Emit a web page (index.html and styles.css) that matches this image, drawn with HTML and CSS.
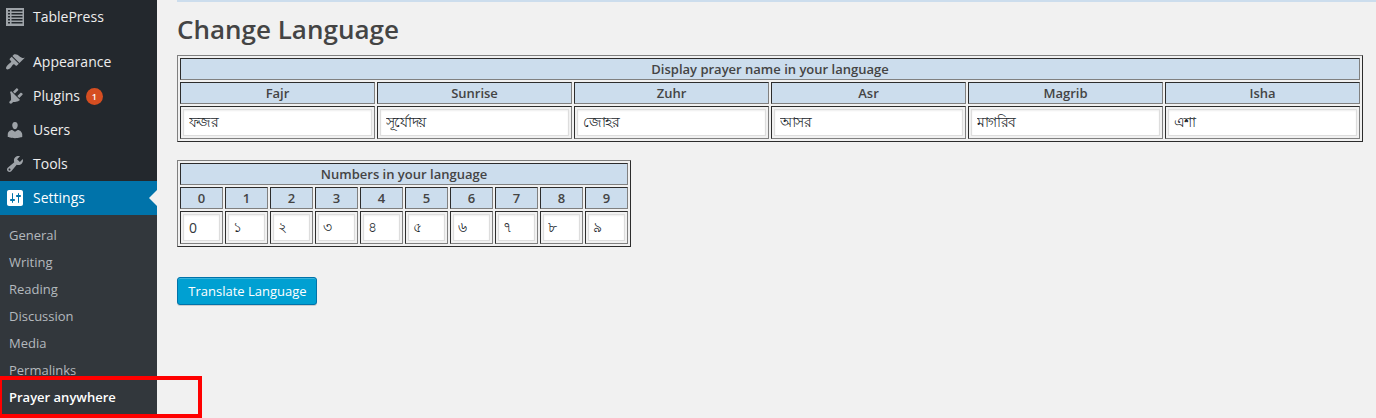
FILE: index.html
```html
<!DOCTYPE html>
<html lang="en">
<head>
<meta charset="utf-8">
<title>Change Language</title>
<link rel="stylesheet" href="styles.css">
</head>
<body>
<div class="layout">
  <nav class="sidebar">
    <ul class="menu">
      <li class="menu-item"><svg class="icon" viewBox="0 0 20 20"><path fill-rule="evenodd" d="M1 1h18v18H1zM3 3v1.500h2V3zM6.500 3v1.500H17.500V3zM3 6v1.500h2V6zM6.500 6v1.500H17.500V6zM3 9v1.500h2V9zM6.500 9v1.500H17.500V9zM3 12v1.500h2V12zM6.500 12v1.500H17.500V12zM3 15v1.500h2V15zM6.500 15v1.500H17.500V15z"/></svg><span>TablePress</span></li>
      <li class="separator"></li>
      <li class="menu-item"><svg class="icon" viewBox="0 0 20 20"><path d="M14.480 11.060L7.410 3.990l1.500-1.500c.5-.56 2.300-.47 3.510.32 1.210.8 1.430 1.280 2.910 2.100 1.180.64 2.450 1.260 4.450.85zm-.71.71L6.700 4.700 4.930 6.470a.996.996 0 0 0 0 1.410l1.060 1.060c.39.39.39 1.030 0 1.420-.6.600-1.430 1.110-2.210 1.690-.35.260-.700.530-1.010.84C1.430 14.230.400 16.080 1.400 17.070c.99 1 2.840-.03 4.180-1.360.31-.31.580-.66.850-1.020.570-.78 1.080-1.610 1.690-2.210a.996.996 0 0 1 1.410 0l1.060 1.060c.39.39 1.020.39 1.410 0z"/></svg><span>Appearance</span></li>
      <li class="menu-item"><svg class="icon" viewBox="0 0 20 20"><path d="M13.110 4.360L9.870 7.600 8 5.730l3.240-3.240c.35-.34 1.050-.2 1.560.32.520.51.660 1.210.31 1.550zm-8 1.770l.91-1.120 9.010 9.010-1.190.84c-.71.710-2.630 1.160-3.820 1.160H8.140L6.900 17.260c-.59.590-1.540.590-2.120 0-.59-.58-.59-1.530 0-2.120l1.240-1.240v-1.880c0-1.190-.16-4.630-.91-5.890zm7.260 3.970l3.240-3.240c.34-.35 1.040-.21 1.550.31.520.51.660 1.210.31 1.550l-3.240 3.250z"/></svg><span>Plugins</span><b class="badge">1</b></li>
      <li class="menu-item"><svg class="icon" viewBox="0 0 20 20"><path d="M10 9.250c-2.270 0-2.730-3.440-2.730-3.440C7 4.020 7.820 2 9.970 2c2.160 0 2.980 2.020 2.710 3.810 0 0-.41 3.440-2.680 3.440zm0 2.570L12.720 10c2.390 0 4.520 2.330 4.520 4.530v2.490s-3.650 1.130-7.240 1.130c-3.650 0-7.240-1.130-7.240-1.130v-2.490c0-2.250 1.940-4.480 4.470-4.480z"/></svg><span>Users</span></li>
      <li class="menu-item"><svg class="icon" viewBox="0 0 20 20"><path d="M16.680 9.770c-1.340 1.340-3.300 1.670-4.950.99l-5.410 6.520c-.99.990-2.590.990-3.580 0s-.99-2.590 0-3.570l6.520-5.420c-.68-1.650-.35-3.610.99-4.950 1.280-1.280 3.120-1.620 4.720-1.060l-2.890 2.890 2.820 2.820 2.860-2.870c.53 1.580.180 3.390-1.080 4.650zM3.810 16.210c.4.390 1.040.390 1.430 0 .4-.4.400-1.040 0-1.430-.39-.4-1.030-.4-1.430 0-.39.390-.39 1.030 0 1.430z"/></svg><span>Tools</span></li>
      <li class="menu-item current"><svg class="icon" viewBox="0 0 20 20"><path fill-rule="evenodd" d="M18 16V4c0-1.100-.9-2-2-2H4c-1.100 0-2 .9-2 2v12c0 1.100.9 2 2 2h12c1.100 0 2-.9 2-2zM8 11h1c.550 0 1 .450 1 1s-.45 1-1 1H8v1.500c0 .280-.22.500-.5.500s-.5-.22-.5-.5V13H6c-.55 0-1-.45-1-1s.450-1 1-1h1V5.500c0-.28.220-.5.500-.5s.5.220.5.500zm5-2h-1c-.55 0-1-.45-1-1s.450-1 1-1h1V5.500c0-.28.220-.5.500-.5s.5.220.5.500V7h1c.550 0 1 .450 1 1s-.45 1-1 1h-1v5.500c0 .280-.22.500-.5.500s-.5-.22-.5-.5z"/></svg><span>Settings</span></li>
    </ul>
    <ul class="submenu">
      <li>General</li><li>Writing</li><li>Reading</li><li>Discussion</li><li>Media</li><li>Permalinks</li><li class="active">Prayer anywhere</li>
    </ul>
    <div class="highlight"></div>
  </nav>
  <main class="content">
    <div class="notice-edge"></div>
    <h2 class="title">Change Language</h2>
    <table class="grid names">
      <tr><th colspan="6">Display prayer name in your language</th></tr>
      <tr><th>Fajr</th><th>Sunrise</th><th>Zuhr</th><th>Asr</th><th>Magrib</th><th>Isha</th></tr>
      <tr>
        <td><input class="field bengali" type="text" value="ফজর"></td>
        <td><input class="field bengali" type="text" value="সূর্যোদয়"></td>
        <td><input class="field bengali" type="text" value="জোহর"></td>
        <td><input class="field bengali" type="text" value="আসর"></td>
        <td><input class="field bengali" type="text" value="মাগরিব"></td>
        <td><input class="field bengali" type="text" value="এশা"></td>
      </tr>
    </table>
    <table class="grid numbers">
      <tr><th colspan="10">Numbers in your language</th></tr>
      <tr><th>0</th><th>1</th><th>2</th><th>3</th><th>4</th><th>5</th><th>6</th><th>7</th><th>8</th><th>9</th></tr>
      <tr>
        <td><input class="field" type="text" value="0"></td>
        <td><input class="field digit" type="text" value="১"></td>
        <td><input class="field digit" type="text" value="২"></td>
        <td><input class="field digit" type="text" value="৩"></td>
        <td><input class="field digit" type="text" value="৪"></td>
        <td><input class="field digit" type="text" value="৫"></td>
        <td><input class="field digit" type="text" value="৬"></td>
        <td><input class="field digit" type="text" value="৭"></td>
        <td><input class="field digit" type="text" value="৮"></td>
        <td><input class="field digit" type="text" value="৯"></td>
      </tr>
    </table>
    <button class="button" type="button">Translate Language</button>
  </main>
</div>
</body>
</html>
```

FILE: styles.css
```css
* { box-sizing: border-box; }
body {
  margin: 0;
  background: #f1f1f1;
  color: #444;
  font: 13px/18px "Open Sans", sans-serif;
  overflow: hidden;
}
.layout { display: flex; height: 418px; }
.sidebar {
  position: relative;
  width: 157px;
  flex: none;
  background: #23282d;
  display: flex;
  flex-direction: column;
}
.menu, .submenu { margin: 0; padding: 0; list-style: none; }
.menu-item {
  display: flex;
  align-items: center;
  height: 34px;
  padding-left: 5px;
  font-size: 14px;
  color: #eee;
}
.separator { height: 11px; }
.icon { width: 20px; height: 20px; margin-right: 8px; fill: #9ea3a8; }
.badge {
  width: 17px;
  height: 17px;
  margin-left: 6px;
  border-radius: 50%;
  background: #d54e21;
  color: #fff;
  font-size: 9px;
  font-weight: 600;
  line-height: 17px;
  text-align: center;
}
.current { position: relative; background: #0073aa; color: #fff; }
.current .icon { fill: #fff; }
.current::after {
  content: "";
  position: absolute;
  right: 0;
  top: 9px;
  border: 8px solid transparent;
  border-left-width: 0;
  border-right-color: #f1f1f1;
}
.submenu {
  flex: 1;
  padding: 7px 0 0 9px;
  background: #32373c;
  color: #b4b9be;
}
.submenu li { height: 27px; line-height: 27px; }
.submenu .active { color: #fff; font-weight: 600; }
.highlight {
  position: absolute;
  left: -2px;
  top: 376px;
  width: 204px;
  height: 42px;
  border: 4px solid #f00;
}
.content { flex: 1; padding-left: 20px; }
.notice-edge { height: 2px; background: #ccdded; }
.title {
  margin: 10px 0 8px;
  font-size: 26px;
  line-height: 35px;
  font-weight: 600;
}
.grid {
  table-layout: fixed;
  border: 1px solid;
  border-color: #808080 #2c2c2c #2c2c2c #808080;
  border-collapse: separate;
  border-spacing: 2px;
}
.names { width: 1186px; }
.numbers { width: 454px; margin-top: 18px; }
.grid th, .grid td {
  border: 1px solid;
  border-color: #2c2c2c #808080 #808080 #2c2c2c;
}
.grid th {
  height: 22px;
  padding: 1px;
  background: #ccdded;
  font-weight: 600;
  line-height: 18px;
}
.grid td { height: 33px; padding: 2px; }
.field {
  display: block;
  width: 100%;
  height: 27px;
  margin: 0;
  padding: 3px 5px;
  border: 1px solid #ddd;
  background: #fff;
  box-shadow: inset 0 1px 2px rgba(0, 0, 0, .07);
  color: #32373c;
  font: 14px/19px "Open Sans", sans-serif;
}
.bengali { letter-spacing: -.7px; color: #23282d; }
.digit { padding-left: 4px; color: #23282d; }
.button {
  display: block;
  width: 140px;
  height: 28px;
  margin-top: 30px;
  padding: 0 0 0 1px;
  border: 1px solid #0073aa;
  border-radius: 3px;
  background: #00a0d2;
  box-shadow: inset 0 1px 0 rgba(120, 200, 230, .5), 0 1px 0 rgba(0, 0, 0, .15);
  color: #fff;
  font: 13px/26px "Open Sans", sans-serif;
}
```
